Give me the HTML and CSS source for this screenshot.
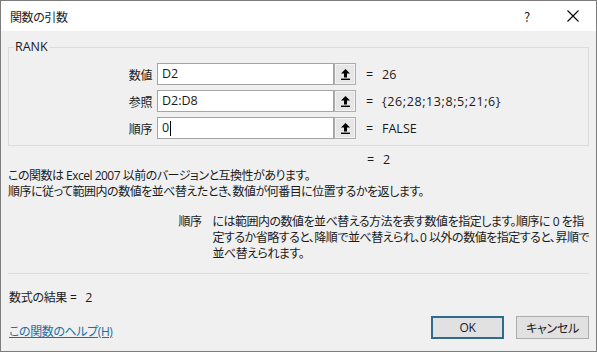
FILE: index.html
```html
<!DOCTYPE html>
<html lang="ja">

<head>
    <meta charset="UTF-8">
    <title>関数の引数</title>
    <link rel="stylesheet" href="styles.css">
</head>

<body>
    <div class="window">
        <div class="titlebar">
            <span class="title">関数の引数</span>
            <span class="help">?</span>
            <span class="close">
                <svg width="12" height="12" viewBox="0 0 12 12">
                    <path d="M0.5 0.5 L11.5 11.5 M11.5 0.5 L0.5 11.5" stroke="#000" stroke-width="1.1" fill="none"/>
                </svg>
            </span>
        </div>
        <div class="content">
            <fieldset class="group">
                <legend>RANK</legend>
                <div class="args">
                    <label class="arg_name">数値</label>
                    <div class="edit">D2</div>
                    <a href="javascript:;" class="ref_btn">
                        <svg width="9" height="11" viewBox="0 0 9 11">
                            <path d="M4.5 0 L9 4.5 L6 4.5 L6 8.5 L3 8.5 L3 4.5 L0 4.5 Z" fill="#000"/>
                            <rect x="0" y="9.6" width="9" height="1.4" fill="#000"/>
                        </svg>
                    </a>
                    <span class="eq">=</span>
                    <span class="val">26</span>

                    <label class="arg_name">参照</label>
                    <div class="edit">D2:D8</div>
                    <a href="javascript:;" class="ref_btn">
                        <svg width="9" height="11" viewBox="0 0 9 11">
                            <path d="M4.5 0 L9 4.5 L6 4.5 L6 8.5 L3 8.5 L3 4.5 L0 4.5 Z" fill="#000"/>
                            <rect x="0" y="9.6" width="9" height="1.4" fill="#000"/>
                        </svg>
                    </a>
                    <span class="eq">=</span>
                    <span class="val val_wide">{26;28;13;8;5;21;6}</span>

                    <label class="arg_name">順序</label>
                    <div class="edit">0<span class="caret"></span></div>
                    <a href="javascript:;" class="ref_btn">
                        <svg width="9" height="11" viewBox="0 0 9 11">
                            <path d="M4.5 0 L9 4.5 L6 4.5 L6 8.5 L3 8.5 L3 4.5 L0 4.5 Z" fill="#000"/>
                            <rect x="0" y="9.6" width="9" height="1.4" fill="#000"/>
                        </svg>
                    </a>
                    <span class="eq">=</span>
                    <span class="val">FALSE</span>
                </div>
            </fieldset>

            <div class="result_row">
                <span class="eq">=</span>
                <span class="val">2</span>
            </div>

            <p class="desc">この関数は Excel 2007 以前のバージョンと互換性があります。<br>順序に従って範囲内の数値を並べ替えたとき、数値が何番目に位置するかを返します。</p>

            <div class="arg_help">
                <span class="arg_help_name">順序</span>
                <span class="arg_help_text">には範囲内の数値を並べ替える方法を表す数値を指定します。順序に 0 を指<br>定するか省略すると、降順で並べ替えられ、0 以外の数値を指定すると、昇順で<br>並べ替えられます。</span>
            </div>

            <div class="spacer"></div>

            <div class="formula_result">数式の結果 = <span class="val">2</span></div>

            <div class="footer">
                <a href="javascript:;" class="help_link">この関数のヘルプ(H)</a>
                <div class="buttons">
                    <a href="javascript:;" class="btn btn_ok">OK</a>
                    <a href="javascript:;" class="btn">キャンセル</a>
                </div>
            </div>
        </div>
    </div>
</body>

</html>
```
FILE: styles.css
```css
* {
    padding: 0;
    margin: 0;
    box-sizing: border-box;
}

body {
    background: #fff;
    font-family: "Noto Sans CJK JP", "Noto Sans", sans-serif;
    font-size: 12px;
    color: #1a1a1a;
    font-feature-settings: "palt";
}

.window {
    width: 597px;
    height: 352px;
    border: 1px solid #7c7c7c;
    background-color: #f0f0f0;
    display: flex;
    flex-direction: column;
}

/* タイトルバー */
.titlebar {
    height: 30px;
    flex-shrink: 0;
    background-color: #fff;
    display: flex;
    align-items: center;
    padding-left: 9px;
}

.title {
    flex: 1;
    font-size: 12px;
    letter-spacing: -0.4px;
}

.help {
    width: 20px;
    text-align: center;
    font-size: 13px;
    margin-right: 30px;
}

.close {
    width: 12px;
    height: 12px;
    margin-right: 17px;
    display: flex;
}

.content {
    flex: 1;
    display: flex;
    flex-direction: column;
    padding: 0 7px;
}

.content > * {
    flex-shrink: 0;
}

/* グループボックス */
.group {
    margin-top: 9px;
    border: 1px solid #dcdcdc;
    padding: 9px 0 6px 0;
}

.group legend {
    margin-left: 5px;
    padding: 0 1px;
    font-family: "Open Sans", sans-serif;
    font-size: 12.5px;
    line-height: 14px;
}

.args {
    display: grid;
    grid-template-columns: 148px 177px 22px 26px 1fr;
    grid-auto-rows: 22px;
    row-gap: 5px;
    align-items: center;
}

.arg_name {
    text-align: right;
    padding-right: 5px;
    letter-spacing: -0.4px;
}

.edit {
    height: 22px;
    border: 1px solid #a5a5a5;
    background-color: #fff;
    padding-left: 4px;
    font-family: "Open Sans", sans-serif;
    font-size: 12.5px;
    line-height: 20px;
    display: flex;
    align-items: center;
}

.caret {
    width: 1px;
    height: 15px;
    background-color: #000;
    margin-left: 1px;
}

.ref_btn {
    width: 22px;
    height: 22px;
    border: 1px solid #adadad;
    background-color: #e6e6e6;
    box-shadow: inset 0 0 0 1px #f4f4f4;
    display: flex;
    align-items: center;
    justify-content: center;
}

.eq {
    padding-left: 10px;
    font-family: "Open Sans", sans-serif;
    font-size: 12.5px;
}

.val {
    font-family: "Open Sans", sans-serif;
    font-size: 12.5px;
}

.val_wide {
    letter-spacing: 0.6px;
}

.result_row {
    display: flex;
    height: 17px;
    align-items: center;
    margin-top: 5px;
    padding-left: 349px;
}

.result_row .eq {
    width: 26px;
}

.desc,
.arg_help {
    font-family: "Open Sans", "Noto Sans CJK JP", sans-serif;
    letter-spacing: -0.5px;
    white-space: nowrap;
}

.desc {
    line-height: 16px;
}

.arg_help {
    display: flex;
    margin-top: 14px;
    line-height: 16px;
}

.arg_help_name {
    width: 205px;
    text-align: right;
    padding-right: 11px;
}

.spacer {
    flex: 1;
}

.formula_result {
    border-top: 1px solid #dcdcdc;
    padding: 14px 0 0 1px;
    height: 38px;
    font-family: "Open Sans", "Noto Sans CJK JP", sans-serif;
    letter-spacing: -0.3px;
}

.formula_result .val {
    margin-left: 6px;
}

.footer {
    height: 40px;
    display: flex;
    align-items: flex-start;
    justify-content: space-between;
    padding-left: 1px;
}

.help_link {
    color: #1c6ea4;
    margin-top: 11px;
    letter-spacing: -0.4px;
    font-family: "Open Sans", "Noto Sans CJK JP", sans-serif;
}

.buttons {
    display: flex;
    gap: 12px;
    margin-top: 5px;
}

.btn {
    width: 73px;
    height: 23px;
    border: 1px solid #adadad;
    background-color: #e1e1e1;
    color: #1a1a1a;
    text-decoration: none;
    display: flex;
    align-items: center;
    justify-content: center;
    font-family: "Open Sans", "Noto Sans CJK JP", sans-serif;
    letter-spacing: -0.3px;
}

.btn_ok {
    border: 2px solid #2e6b8e;
}
```
